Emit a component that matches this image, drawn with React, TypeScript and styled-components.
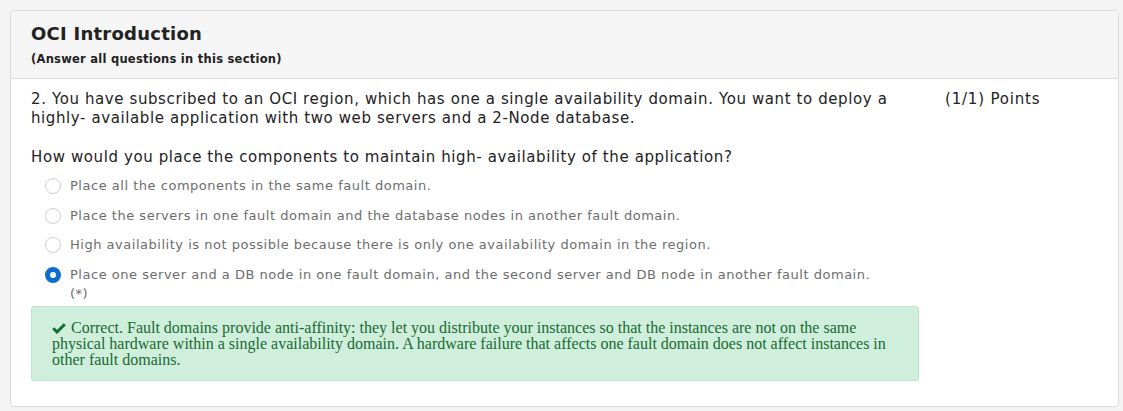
import React from 'react'
import styled, {createGlobalStyle} from 'styled-components'

const GlobalStyle = createGlobalStyle`
  html, body {
    margin: 0;
    padding: 0;
    background: #f4f4f4;
  }
  body {
    font-family: "DejaVu Sans", Verdana, sans-serif;
    color: #222;
  }
`

const Page = styled.div`
  width: 1123px;
  height: 411px;
  padding: 10px 4px 0 10px;
  box-sizing: border-box;
`

const Card = styled.section`
  width: 1109px;
  height: 397px;
  box-sizing: border-box;
  background: #fff;
  border: 1px solid #dcdcdc;
  border-radius: 4px;
  overflow: hidden;
`

const Header = styled.header`
  background: #f5f5f5;
  border-bottom: 1px solid #dcdcdc;
  height: 68px;
  box-sizing: border-box;
  padding: 12px 20px 0;
`

const Title = styled.h2`
  margin: 0;
  font-size: 18px;
  line-height: 21px;
  font-weight: bold;
  letter-spacing: 0.25px;
  color: #222;
`

const Subtitle = styled.div`
  margin-top: 8px;
  font-size: 11.5px;
  line-height: 14px;
  font-weight: bold;
  letter-spacing: 0.25px;
  color: #222;
`

const Body = styled.div`
  display: grid;
  grid-template-columns: 888px 1fr;
  column-gap: 26px;
  padding: 11px 20px 0;
`

const QuestionCol = styled.div`
  display: flex;
  flex-direction: column;
`

const Points = styled.div`
  font-size: 15px;
  line-height: 19px;
  letter-spacing: 0.8px;
  color: #222;
`

const Prompt = styled.p<{$gap?: number}>`
  margin: 0 0 ${p => p.$gap ?? 0}px;
  font-size: 15px;
  line-height: 19px;
  letter-spacing: 0.6px;
  color: #222;
`

const Options = styled.div`
  display: flex;
  flex-direction: column;
  gap: 10.5px;
  padding: 0 35px 0 14px;
  margin-top: 9px;
`

const Option = styled.label`
  display: flex;
  align-items: flex-start;
  gap: 9px;
  font-size: 13px;
  line-height: 19px;
  letter-spacing: 0.52px;
  color: #6d6d6d;
`

const Radio = styled.span<{$checked?: boolean}>`
  flex: none;
  width: 16px;
  height: 16px;
  margin-top: 2px;
  box-sizing: border-box;
  border-radius: 50%;
  border: ${p => (p.$checked ? '5px solid #0b6ecf' : '1px solid #cfcfcf')};
  background: #fff;
`

const Feedback = styled.div`
  margin-top: 3px;
  background: #cfeedb;
  border: 1px solid #bfe3cb;
  border-radius: 3px;
  padding: 13px 20px 12px;
  font-family: "Liberation Serif", "Times New Roman", serif;
  font-size: 16px;
  line-height: 16px;
  color: #176b33;
`

const Check = styled.svg`
  width: 14px;
  height: 12px;
  margin-right: 5px;
  vertical-align: -1px;
`

const options = [
  'Place all the components in the same fault domain.',
  'Place the servers in one fault domain and the database nodes in another fault domain.',
  'High availability is not possible because there is only one availability domain in the region.',
  'Place one server and a DB node in one fault domain, and the second server and DB node in another fault domain. (*)',
]

export default function App() {
  return <>
    <GlobalStyle/>
    <Page>
      <Card>
        <Header>
          <Title>OCI Introduction</Title>
          <Subtitle>(Answer all questions in this section)</Subtitle>
        </Header>
        <Body>
          <QuestionCol>
            <Prompt $gap={20}>
              2. You have subscribed to an OCI region, which has one a single availability domain. You want to deploy a
              highly- available application with two web servers and a 2-Node database.
            </Prompt>
            <Prompt>How would you place the components to maintain high- availability of the application?</Prompt>
            <Options>
              {options.map((text, i) => (
                <Option key={text}>
                  <Radio $checked={i === 3}/>
                  <span>{text}</span>
                </Option>
              ))}
            </Options>
            <Feedback>
              <Check viewBox="0 0 14 12">
                <path d="M1.2 6.2 L5 10 L12.8 2.2" fill="none" stroke="#176b33" strokeWidth="3"/>
              </Check>
              Correct. Fault domains provide anti-affinity: they let you distribute your instances so that the instances are not on the same
              physical hardware within a single availability domain. A hardware failure that affects one fault domain does not affect instances in
              other fault domains.
            </Feedback>
          </QuestionCol>
          <Points>(1/1) Points</Points>
        </Body>
      </Card>
    </Page>
  </>
}
